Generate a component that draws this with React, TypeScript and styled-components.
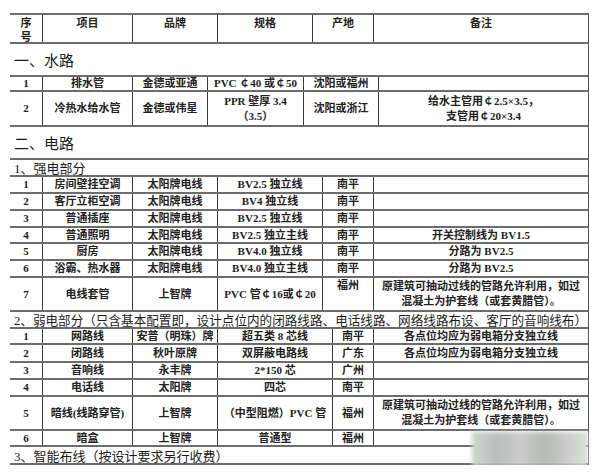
import React from "react"
import styled, { createGlobalStyle } from "styled-components"

const GlobalStyle = createGlobalStyle`
  body {
    margin: 0;
    background: #fff;
    font-family: "Liberation Serif", "Noto Sans CJK SC", serif;
    color: #1c1c1c;
  }
`

// column widths per section, they are not the same in the original sheet
const HEAD = "33px 90px 85px 95px 61px 1fr"
const WATER = "33px 90px 75px 96px 75px 1fr"
const STRONG = "33px 90px 85px 105px 51px 1fr"
const WEAK = "33px 90px 85px 115px 41px 1fr"

type Item = {
  no: string
  name: string
  brand: string
  spec: React.ReactNode
  origin: string
  note?: React.ReactNode
  h: number
  originTop?: boolean
}

const LONG_NOTE = (
  <>
    原建筑可抽动过线的管路允许利用，如过
    <br />
    混凝土为护套线（或套黄腊管）。
  </>
)

const water: Item[] = [
  { no: "1", name: "排水管", brand: "金德或亚通", spec: "PVC ￠40 或￠50", origin: "沈阳或福州", h: 15 },
  {
    no: "2",
    name: "冷热水给水管",
    brand: "金德或伟星",
    spec: (
      <>
        PPR 壁厚 3.4
        <br />
        （3.5）
      </>
    ),
    origin: "沈阳或浙江",
    note: (
      <>
        给水主管用￠2.5×3.5，
        <br />
        支管用￠20×3.4
      </>
    ),
    h: 35,
  },
]

const strong: Item[] = [
  { no: "1", name: "房间壁挂空调", brand: "太阳牌电线", spec: "BV2.5 独立线", origin: "南平", h: 17 },
  { no: "2", name: "客厅立柜空调", brand: "太阳牌电线", spec: "BV4 独立线", origin: "南平", h: 17 },
  { no: "3", name: "普通插座", brand: "太阳牌电线", spec: "BV2.5 独立线", origin: "南平", h: 17 },
  { no: "4", name: "普通照明", brand: "太阳牌电线", spec: "BV2.5 独立主线", origin: "南平", note: "开关控制线为 BV1.5", h: 16 },
  { no: "5", name: "厨房", brand: "太阳牌电线", spec: "BV4.0 独立线", origin: "南平", note: "分路为 BV2.5", h: 17 },
  { no: "6", name: "浴霸、热水器", brand: "太阳牌电线", spec: "BV4.0 独立主线", origin: "南平", note: "分路为 BV2.5", h: 17 },
  { no: "7", name: "电线套管", brand: "上智牌", spec: "PVC 管￠16或￠20", origin: "福州", note: LONG_NOTE, h: 34, originTop: true },
]

const weak: Item[] = [
  { no: "1", name: "网路线", brand: "安普（明珠）牌", spec: "超五类 8 芯线", origin: "南平", note: "各点位均应为弱电箱分支独立线", h: 16 },
  { no: "2", name: "闭路线", brand: "秋叶原牌", spec: "双屏蔽电路线", origin: "广东", note: "各点位均应为弱电箱分支独立线", h: 18 },
  { no: "3", name: "音响线", brand: "永丰牌", spec: "2*150 芯", origin: "广州", h: 17 },
  { no: "4", name: "电话线", brand: "太阳牌", spec: "四芯", origin: "南平", h: 17 },
  { no: "5", name: "暗线(线路穿管)", brand: "上智牌", spec: "（中型阻燃）PVC 管", origin: "福州", note: LONG_NOTE, h: 34 },
  { no: "6", name: "暗盒", brand: "上智牌", spec: "普通型", origin: "福州", h: 16 },
]

const Rows: React.FC<{ items: Item[]; cols: string }> = ({ items, cols }) => (
  <>
    {items.map((it) => (
      <Row key={it.no} $cols={cols} $h={it.h}>
        <Cell>{it.no}</Cell>
        <Cell>{it.name}</Cell>
        <Cell>{it.brand}</Cell>
        <Cell>{it.spec}</Cell>
        <Cell $top={it.originTop}>{it.origin}</Cell>
        <Cell>{it.note}</Cell>
      </Row>
    ))}
  </>
)

export default function App() {
  return (
    <>
      <GlobalStyle />
      <Sheet>
        <Row $cols={HEAD} $h={29}>
          <HeadCell>
            序<br />号
          </HeadCell>
          <HeadCell>项目</HeadCell>
          <HeadCell>品牌</HeadCell>
          <HeadCell>规格</HeadCell>
          <HeadCell>产地</HeadCell>
          <HeadCell>备注</HeadCell>
        </Row>

        <Section $h={33} $size={15}>一、水路</Section>
        <Rows items={water} cols={WATER} />

        <Section $h={33} $size={15}>二、电路</Section>
        <Section $h={17} $size={13}>1、强电部分</Section>
        <Rows items={strong} cols={STRONG} />

        <Section $h={17} $size={12.6}>
          2、弱电部分（只含基本配置即，设计点位内的闭路线路、电话线路、网络线路布设、客厅的音响线布）
        </Section>
        <Rows items={weak} cols={WEAK} />

        <Section $h={18} $size={13}>3、智能布线（按设计要求另行收费）</Section>

        <Smudge />
      </Sheet>
    </>
  )
}

const Sheet = styled.div`
  position: relative;
  width: 578px;
  margin: 13px 0 0 10px;
  border-top: 2px solid #6c6c6c;
  border-right: 1px solid #555;
`

const Row = styled.div<{ $cols: string; $h: number }>`
  display: grid;
  grid-template-columns: ${(p) => p.$cols};
  height: ${(p) => p.$h}px;
  box-sizing: border-box;
  border-bottom: 2px solid #6c6c6c;
`

const Cell = styled.div<{ $top?: boolean }>`
  display: flex;
  align-items: ${(p) => (p.$top ? "flex-start" : "center")};
  justify-content: center;
  text-align: center;
  white-space: nowrap;
  overflow: hidden;
  border-right: 1px solid #3a3a3a;
  font-size: 11px;
  line-height: 15px;
  font-weight: 700;
  color: #222;

  &:last-child {
    border-right: none;
  }
`

const HeadCell = styled(Cell)`
  align-items: flex-start;
  padding-top: 1px;
  line-height: 14px;
`

const Section = styled.div<{ $h: number; $size: number }>`
  display: flex;
  align-items: center;
  height: ${(p) => p.$h}px;
  box-sizing: border-box;
  padding-left: 4px;
  border-bottom: 2px solid #6c6c6c;
  font-size: ${(p) => p.$size}px;
  white-space: nowrap;
  overflow: hidden;
  color: #1c1c1c;
`

// blurred watermark patch at the lower right corner
const Smudge = styled.div`
  position: absolute;
  left: 462px;
  top: 417px;
  width: 116px;
  height: 34px;
  background: linear-gradient(
    90deg,
    #cfd4cf 0%,
    #b9c0b9 22%,
    #c8cec7 42%,
    #b4bcb4 62%,
    #c9cec8 82%,
    #dde0dc 100%
  );
  filter: blur(2px);
`
